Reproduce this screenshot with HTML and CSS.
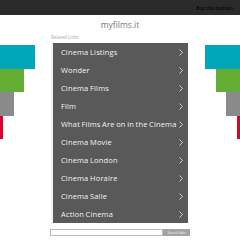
FILE: index.html
```html
<!DOCTYPE html>
<html lang="en">
<head>
  <meta charset="UTF-8">
  <title>myfilms.it</title>
  <link rel="stylesheet" href="styles.css">
</head>
<body>
  <div class="topbar">
    <a class="buy" href="#">Buy this domain.</a>
  </div>

  <div class="page">
    <div class="decor decor-left">
      <div class="bar cyan"></div>
      <div class="bar green"></div>
      <div class="bar grey"></div>
      <div class="bar red"></div>
    </div>

    <div class="content">
      <h1 class="domain">myfilms.it</h1>
      <div class="related">Related Links</div>
      <ul class="links">
        <li class="c1"><span>Cinema Listings</span><svg viewBox="0 0 4 7"><polyline points="0.5,0.5 3.5,3.5 0.5,6.5"/></svg></li>
        <li class="c2"><span>Wonder</span><svg viewBox="0 0 4 7"><polyline points="0.5,0.5 3.5,3.5 0.5,6.5"/></svg></li>
        <li class="c3"><span>Cinema Films</span><svg viewBox="0 0 4 7"><polyline points="0.5,0.5 3.5,3.5 0.5,6.5"/></svg></li>
        <li class="c4"><span>Film</span><svg viewBox="0 0 4 7"><polyline points="0.5,0.5 3.5,3.5 0.5,6.5"/></svg></li>
        <li class="c5"><span>What Films Are on in the Cinema</span><svg viewBox="0 0 4 7"><polyline points="0.5,0.5 3.5,3.5 0.5,6.5"/></svg></li>
        <li class="c1"><span>Cinema Movie</span><svg viewBox="0 0 4 7"><polyline points="0.5,0.5 3.5,3.5 0.5,6.5"/></svg></li>
        <li class="c2"><span>Cinema London</span><svg viewBox="0 0 4 7"><polyline points="0.5,0.5 3.5,3.5 0.5,6.5"/></svg></li>
        <li class="c3"><span>Cinema Horaire</span><svg viewBox="0 0 4 7"><polyline points="0.5,0.5 3.5,3.5 0.5,6.5"/></svg></li>
        <li class="c4"><span>Cinema Salle</span><svg viewBox="0 0 4 7"><polyline points="0.5,0.5 3.5,3.5 0.5,6.5"/></svg></li>
        <li class="c5"><span>Action Cinema</span><svg viewBox="0 0 4 7"><polyline points="0.5,0.5 3.5,3.5 0.5,6.5"/></svg></li>
      </ul>
      <form class="search">
        <input type="text">
        <button type="button">Search Ads</button>
      </form>
    </div>

    <div class="decor decor-right">
      <div class="bar cyan"></div>
      <div class="bar green"></div>
      <div class="bar grey"></div>
      <div class="bar red"></div>
    </div>
  </div>
</body>
</html>
```

FILE: styles.css
```css
body {
  margin: 0;
  background-color: #fff;
  font-family: "Open Sans", sans-serif;
}

.topbar {
  height: 15px;
  background-color: #2b2b2b;
  display: flex;
  justify-content: flex-end;
  align-items: center;
  padding-right: 6px;
}

.buy {
  color: #0c0c0c;
  font-size: 4.5px;
  font-weight: bold;
  text-decoration: none;
}

.page {
  display: grid;
  grid-template-columns: 50px 140px 50px;
}

.decor {
  display: flex;
  flex-direction: column;
  padding-top: 30px;
}

.decor-left {
  align-items: flex-start;
}

.decor-right {
  align-items: flex-end;
}

.bar {
  height: 23.5px;
}

.cyan {
  background-color: #00a7bb;
  width: 35px;
}

.green {
  background-color: #62ad32;
  width: 24px;
}

.grey {
  background-color: #8a8a8a;
  width: 14px;
}

.red {
  background-color: #d9002b;
  width: 3px;
}

.content {
  display: flex;
  flex-direction: column;
}

.domain {
  margin: 4px 0 0;
  height: 12px;
  font-size: 8.5px;
  line-height: 12px;
  font-weight: normal;
  text-align: center;
  color: #777;
}

.related {
  margin: 2px 0 0 1px;
  height: 10px;
  font-size: 4.5px;
  line-height: 8px;
  color: #a8a8a8;
}

.links {
  list-style: none;
  margin: 0 2px 0 1px;
  padding: 0;
  background-color: #595959;
}

.links li {
  height: 18px;
  display: flex;
  align-items: center;
  justify-content: space-between;
  padding: 0 5px 0 8px;
  border-left: 2px solid;
  color: #f2f2f2;
  font-size: 7.5px;
  letter-spacing: 0.15px;
  word-spacing: -0.5px;
  white-space: nowrap;
}

.links svg {
  flex-shrink: 0;
  width: 4px;
  height: 7px;
  fill: none;
  stroke: #e6e6e6;
  stroke-width: 0.8;
}

.c1 { border-color: #22776a; }
.c2 { border-color: #b8cc32; }
.c3 { border-color: #f1c21f; }
.c4 { border-color: #e5762a; }
.c5 { border-color: #1c4b62; }

.search {
  display: flex;
  margin: 6px 0 0;
  height: 7px;
}

.search input {
  width: 113px;
  height: 7px;
  box-sizing: border-box;
  border: 1px solid #bbb;
  padding: 0;
  margin: 0;
}

.search button {
  width: 27px;
  height: 7px;
  border: none;
  padding: 0;
  margin: 0;
  background-color: #a3a3a3;
  color: #eee;
  font-size: 3.5px;
  font-family: "Open Sans", sans-serif;
}
```
